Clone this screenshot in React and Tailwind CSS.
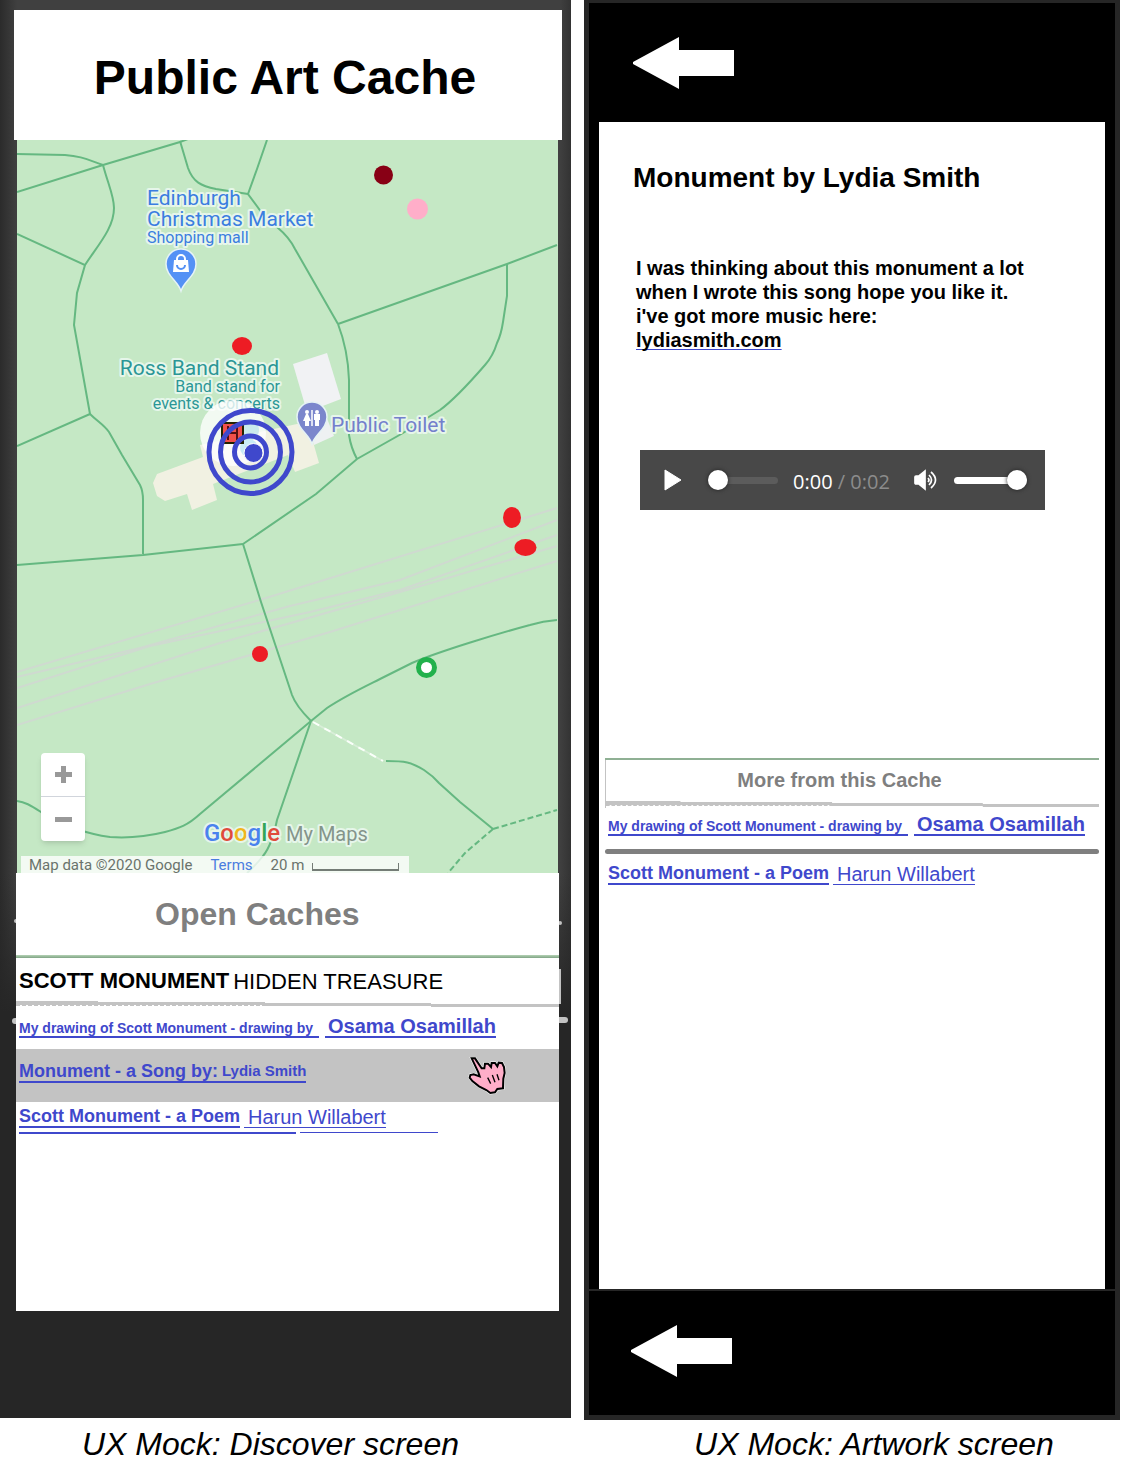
import React from "react";

const FONT = "font-['Liberation_Sans',Arial,sans-serif]";

const PATHS = [
  "M17 192 L103 165 L180 142 L188 139",
  "M17 154 L65 155 C80 156 86 159 103 165",
  "M103 165 C108 184 114 196 114 208 C114 228 98 245 85 265",
  "M17 234 L85 265 L77 293 L74 325 L90 414",
  "M17 446 L90 414 C98 422 103 424 109 432 L122 455 L140 485 Q143 491 143 500 V554",
  "M17 565 L143 555 L243 544",
  "M180 141 L188 168 C193 182 201 186 216 189 L248 194",
  "M267 140 L257 169 L248 194 L262 213 L278 228 Q289 237 295 249 L338 324",
  "M338 324 L507 264 L557 245",
  "M338 324 Q348 350 349 380 V435 Q351 448 357 459",
  "M507 264 V296 L503 322 Q501 335 497 343 Q493 356 485 365 C472 380 455 399 440 410 L403 433 L357 459 L316 494 L243 544",
  "M243 544 L261 602 L275 644 L292 695 Q296 706 311 721",
  "M311 721 L327 708 C345 696 362 688 380 679 L412 663 C440 651 500 633 530 625 Q543 621 557 620",
  "M311 721 L200 814 C188 825 180 828 165 832 C145 837 125 838 110 837 C95 835 88 833 80 830 L41 812 C30 805 25 802 17 801",
  "M311 721 L277 820 Q272 845 263 856 Q256 865 247 873",
  "M386 761 C405 761 411 762 424 770 Q433 776 439 783 L460 802 L493 829",
];

const RAILS = [
  "M17 672 L266 598 L557 508",
  "M17 677 L140 648 L290 606 L400 580 L557 520",
  "M17 688 L150 646 L310 612 L400 590 L557 535",
  "M17 708 L220 643 L400 592 L557 546",
  "M17 725 L150 684 L330 632 L557 561",
];

const HALO = { paintOrder: "stroke", stroke: "#e6f6ea", strokeWidth: 4, strokeLinejoin: "round" };

function Pin({ x, y, color, children }) {
  return (
    <g transform={`translate(${x} ${y})`}>
      <path
        d="M0 41 C-3 31 -15 26 -15 14 A15 15 0 0 1 15 14 C15 26 3 31 0 41Z"
        fill={color}
        stroke="#e6f3f5"
        strokeWidth="1.500"
      />
      {children}
    </g>
  );
}

function MapDrawing() {
  return (
    <svg viewBox="17 140 541 733" className="block h-auto w-full font-[Roboto,sans-serif]" role="img" aria-label="Map of nearby caches">
      <rect x="17" y="140" width="541" height="733" fill="#c5e8c5" />
      <g fill="none" stroke="#cfdad0" strokeWidth="2">
        {RAILS.map((d) => <path key={d} d={d} />)}
      </g>
      <path d="M293 364 L327 353 L341 399 L307 412Z" fill="#f1f2f4" />
      <path d="M153 483 L157 474 L203 457 L200 445 L297 424 L308 424 L319 463 L295 472 L288 455 L213 484 L217 500 L192 510 L187 494 L165 501 L157 496Z" fill="#f1f1e2" />
      <path d="M306 422 L326 416 L334 436 L314 445Z" fill="#eef1f2" />
      <g fill="none" stroke="#65b881" strokeWidth="2">
        {PATHS.map((d) => <path key={d} d={d} />)}
        <path d="M493 829 L557 810" strokeDasharray="6 3" />
        <path d="M493 829 L465 853 L448 873" strokeDasharray="6 3" />
      </g>
      <path d="M313 722 L383 761" stroke="#d8eed8" strokeWidth="2" />
      <path d="M313 722 L383 761" stroke="#fafffa" strokeWidth="2" strokeDasharray="7 6" />

      <g fontSize="21" style={HALO}>
        <text x="147" y="205" fill="#3b7ee0">Edinburgh</text>
        <text x="147" y="226" fill="#3b7ee0">Christmas Market</text>
        <text x="147" y="243" fill="#3b7ee0" fontSize="16">Shopping mall</text>
        <text x="279" y="375" fill="#2b9696" textAnchor="end">Ross Band Stand</text>
        <text x="280" y="392" fill="#2b9696" textAnchor="end" fontSize="16">Band stand for</text>
        <text x="280" y="409" fill="#2b9696" textAnchor="end" fontSize="16">events &amp; concerts</text>
        <text x="331" y="432" fill="#7480cc">Public Toilet</text>
      </g>

      <Pin x={181} y={250} color="#5491f5">
        <path d="M-7 10 H7 L8 22 H-8Z" fill="#fff" />
        <path d="M-4 11 V9 A4 4 0 0 1 4 9 V11" fill="none" stroke="#fff" strokeWidth="2" />
        <path d="M-4 15 A4 4 0 0 0 4 15" fill="none" stroke="#5491f5" strokeWidth="2" />
      </Pin>
      <Pin x={312} y={403} color="#7b86cc">
        <path d="M0 7 V23" stroke="#fff" strokeWidth="1.500" />
        <circle cx="-5" cy="9" r="2" fill="#fff" />
        <path d="M-6 11 H-4 L-1 18 H-3 V23 H-7 V18 H-9Z" fill="#fff" />
        <circle cx="5" cy="9" r="2" fill="#fff" />
        <path d="M2 11 H8 V17 H7 V23 H3 V17 H2Z" fill="#fff" />
      </Pin>

      <circle cx="233" cy="433" r="33" fill="#ffffff" opacity=".78" />
      <circle cx="248" cy="430" r="11" fill="#b9e2ea" opacity=".7" />
      <circle cx="249" cy="448" r="9" fill="#c9ebf5" />
      <rect x="222" y="423" width="21" height="20" fill="#f2504a" stroke="#220" strokeWidth="2" />
      <path d="M228 426 V440 M237 426 V440 M228 433 H237" stroke="#511" strokeWidth="2" />
      <g fill="none" stroke="#3f48cc" strokeWidth="5">
        <circle cx="250.500" cy="452" r="41.500" />
        <circle cx="250.500" cy="452" r="30" />
        <circle cx="250.500" cy="452" r="16" />
      </g>
      <circle cx="253.500" cy="453" r="9.500" fill="#3f48cc" stroke="#fff" strokeWidth="1" />

      <circle cx="383.500" cy="175" r="9.500" fill="#880015" />
      <circle cx="417.500" cy="209" r="10.500" fill="#ffaec9" />
      <g fill="#ed1c24">
        <ellipse cx="242" cy="346" rx="10" ry="9" />
        <ellipse cx="512" cy="517.500" rx="9" ry="10.500" />
        <ellipse cx="525.500" cy="547.500" rx="11" ry="8.500" />
        <circle cx="260" cy="654" r="8" />
      </g>
      <circle cx="426.500" cy="667.500" r="8" fill="#fff" stroke="#22b14c" strokeWidth="5" />

      <g style={HALO}>
        <text x="204" y="841" fontSize="24" fontWeight="500">
          <tspan fill="#4a82ee">G</tspan>
          <tspan fill="#e04a3c">o</tspan>
          <tspan fill="#f0b51c">o</tspan>
          <tspan fill="#4a82ee">g</tspan>
          <tspan fill="#33a557">l</tspan>
          <tspan fill="#e04a3c">e</tspan>
        </text>
        <text x="286" y="841" fontSize="20" fill="#84948a">My Maps</text>
      </g>
    </svg>
  );
}

function MapPanel() {
  return (
    <div className="relative ml-[17px] mr-[13px]">
      <MapDrawing />
      <div className="absolute bottom-8 left-6 flex w-11 flex-col rounded-sm bg-white shadow-md">
        <button aria-label="Zoom in" className="flex h-11 items-center justify-center border-b border-gray-300">
          <svg width="17" height="17" viewBox="0 0 17 17"><path d="M8.500 0 V17 M0 8.500 H17" stroke="#999" strokeWidth="5" /></svg>
        </button>
        <button aria-label="Zoom out" className="flex h-11 items-center justify-center">
          <svg width="17" height="17" viewBox="0 0 17 17"><path d="M0 8.500 H17" stroke="#999" strokeWidth="5" /></svg>
        </button>
      </div>
      <div className="absolute bottom-0 left-1 flex h-[17px] items-center bg-white/80 pl-2 pr-2.5 font-[Roboto,sans-serif] text-[15px] leading-4 text-[#6a736c]">
        <span>Map data ©2020 Google</span>
        <a href="#terms" className="ml-[18px] text-[#4a7de0]">Terms</a>
        <span className="ml-[18px]">20 m</span>
        <span className="mb-0.5 ml-2 h-2 w-[87px] self-end border-x border-b-2 border-[#747c76]" />
      </div>
    </div>
  );
}

function SteppedDivider() {
  return (
    <svg viewBox="0 0 543 7" preserveAspectRatio="none" className="block h-[7px] w-full" aria-hidden="true">
      <path d="M0 0 H82 V1 H249 V2 H415 V3 H543 V6 H415 V5 H0Z" fill="#c3c3c3" />
      <path d="M4 4.500 H249" stroke="#fff" strokeWidth="1" strokeDasharray="2 4" />
    </svg>
  );
}

function DrawingLink() {
  return (
    <a href="#drawing" className="flex items-end gap-1.5 whitespace-nowrap font-bold text-[#3f48cc]">
      <span className="border-b-2 border-current pr-1.5 text-sm leading-4">My drawing of Scott Monument - drawing by</span>
      <span className="border-b-2 border-current pl-[3px] text-xl leading-5">Osama Osamillah</span>
    </a>
  );
}

function PoemLink() {
  return (
    <a href="#poem" className="flex items-end gap-1 whitespace-nowrap text-[#3f48cc]">
      <span className="border-b-2 border-current text-lg font-bold leading-5">Scott Monument - a Poem</span>
      <span className="border-b border-current pl-1 text-xl leading-5">Harun Willabert</span>
    </a>
  );
}

const HAND =
  "M64 54 L74 54 L94 84 L102 84 L104 70 L113 70 L122 80 L124 68 L134 68 L141 78 L145 67 L155 68 L161 80 L163 98 L159 115 L158 144 L141 146 L134 156 L120 158 L108 149 L86 138 L66 122 L58 112 L60 104 L70 102 L88 108 L84 96Z";

function HandPointer() {
  return (
    <svg width="40" height="38" viewBox="50 50 120 114" className="shrink-0" aria-hidden="true">
      <path d={HAND} fill="#ffaec9" stroke="#fff" strokeWidth="9" />
      <path d={HAND} fill="#ffaec9" stroke="#000" strokeWidth="6" />
      <path d="M112 112 L121 130 M126 104 L134 126 M140 102 L146 120" stroke="#000" strokeWidth="4" />
    </svg>
  );
}

function DiscoverScreen() {
  return (
    <figure>
      <div className="h-[1418px] bg-[linear-gradient(to_right,#2b2b2b,#404040_3%,#404040_98%,#333)] pt-2.5">
        <header className="ml-3.5 mr-[9px] flex h-[130px] items-center justify-center bg-white pr-1.5 pt-1.5">
          <h1 className="text-5xl font-bold">Public Art Cache</h1>
        </header>
        <MapPanel />
        <div className="relative bg-[linear-gradient(to_bottom,transparent,#262626_140px)] pb-[107px]">
          <span className="absolute left-3 top-[145px] h-1.5 w-2 rounded-full bg-[#c3c3c3]" />
          <span className="absolute right-[3px] top-[144px] h-1.5 w-3 rounded-full bg-[#c3c3c3]" />
          <span className="absolute left-3.5 top-[46px] h-1 w-1 rounded-full bg-[#c3c3c3]" />
          <span className="absolute right-[9px] top-12 h-1 w-1 rounded-full bg-[#c3c3c3]" />
          <span className="absolute right-2.5 top-24 h-[35px] w-[3px] bg-[#c3c3c3]" />
          <div className="relative ml-4 mr-3 h-[438px] bg-white">
            <h2 className="h-[82px] pl-[139px] text-[32px] font-bold leading-[82px] text-[#7f7f7f]">Open Caches</h2>
            <div className="h-[3px] bg-gradient-to-b from-[#b5d3b5] to-[#7fa384]" />
            <div className="flex h-[43px] items-center gap-1 whitespace-nowrap pl-[3px] pt-0.5 text-[22px]">
              <strong className="leading-7">SCOTT MONUMENT</strong>
              <span className="pt-0.5 leading-7">HIDDEN TREASURE</span>
            </div>
            <SteppedDivider />
            <div className="flex h-[41px] items-center pb-1 pl-[3px]">
              <DrawingLink />
            </div>
            <div className="flex h-[53px] items-center justify-between bg-[#c3c3c3] pl-[3px] pr-[52px]">
              <a href="#song" className="flex items-end whitespace-nowrap pb-2 font-bold text-[#3f48cc]">
                <span className="border-b-2 border-current text-lg leading-5">Monument - a Song by:</span>
                <span className="border-b-2 border-current pl-1 text-[15px] leading-5">Lydia Smith</span>
              </a>
              <HandPointer />
            </div>
            <div className="flex h-[26px] items-end pl-[3px]">
              <PoemLink />
            </div>
            <div className="ml-[3px] mt-1 flex items-start gap-1">
              <span className="h-0.5 w-[277px] bg-[#3f48cc]" />
              <span className="h-px w-[138px] bg-[#3f48cc]" />
            </div>
          </div>
        </div>
      </div>
      <figcaption className="pr-[30px] pt-2 text-center text-[32px] italic leading-9">UX Mock: Discover screen</figcaption>
    </figure>
  );
}

function BackButton() {
  return (
    <button aria-label="Back" className="block">
      <svg width="102" height="52" viewBox="0 0 102 52">
        <path d="M0 25 L46 0 V13 H101 V39 H46 V52 L0 27Z" fill="#fff" />
      </svg>
    </button>
  );
}

const THUMB =
  "appearance-none rounded-full [&::-webkit-slider-thumb]:h-5 [&::-webkit-slider-thumb]:w-5 [&::-webkit-slider-thumb]:appearance-none [&::-webkit-slider-thumb]:rounded-full [&::-webkit-slider-thumb]:bg-white [&::-webkit-slider-thumb]:shadow-[0_0_4px_#222]";

function Player() {
  return (
    <div className="flex h-[60px] max-w-[405px] items-center bg-[#484848] pl-6 pr-[18px]">
      <button aria-label="Play" className="shrink-0">
        <svg width="18" height="22" viewBox="0 0 18 22"><path d="M1 1 L17 11 L1 21Z" fill="#fff" stroke="#fff" strokeWidth="1" strokeLinejoin="round" /></svg>
      </button>
      <input type="range" aria-label="Seek" defaultValue="0" className={`ml-[26px] h-[7px] w-[70px] bg-[#5c5c5c] ${THUMB}`} />
      <span className="ml-[15px] whitespace-nowrap pt-1 font-['Open_Sans',sans-serif] text-xl text-[#8c8c8c]">
        <span className="text-white">0:00</span> / 0:02
      </span>
      <button aria-label="Mute" className="ml-auto shrink-0">
        <svg width="25" height="22" viewBox="0 0 25 22" fill="none" stroke="#fff" strokeWidth="1.700">
          <path d="M12 2 V20 L6 15 H3 Q2 15 2 14 V8 Q2 7 3 7 H6Z" fill="#fff" />
          <path d="M15 9 Q17 11 15 13 M16 6 Q21 11 16 16 M18 3 Q27 11 18 19" />
        </svg>
      </button>
      <input type="range" aria-label="Volume" defaultValue="100" className={`ml-4 h-[7px] w-[73px] bg-white ${THUMB}`} />
    </div>
  );
}

function ArtworkScreen() {
  return (
    <figure>
      <div className="h-[1420px] border-x-[5px] border-b-[5px] border-t-[3px] border-[#262626] bg-black">
        <div className="h-[119px] pl-11 pt-[34px]">
          <BackButton />
        </div>
        <div className="mx-2.5 h-[1167px] bg-white px-1.5 pt-[38px]">
          <div className="pl-7">
            <h1 className="text-[28px] font-bold leading-9">Monument by Lydia Smith</h1>
            <p className="mt-[60px] pl-[3px] text-xl font-bold leading-6">
              I was thinking about this monument a lot
              <br />
              when I wrote this song hope you like it.
              <br />
              i've got more music here:
              <br />
              <a href="#lydiasmith" className="underline decoration-[#3f48cc] decoration-1 underline-offset-2 [text-decoration-skip-ink:none]">lydiasmith.com</a>
            </p>
            <div className="ml-[7px] mt-[98px]">
              <Player />
            </div>
          </div>
          <section className="mt-[248px]">
            <div className="h-0.5 bg-[#8fb094]" />
            <div className="border-l border-[#c3c3c3]">
              <h2 className="h-[41px] pr-[26px] text-center text-xl font-bold leading-10 text-[#7f7f7f]">More from this Cache</h2>
              <SteppedDivider />
            </div>
            <div className="flex h-[41px] items-center pb-2 pl-[3px]">
              <DrawingLink />
            </div>
            <div className="h-[5px] rounded-full bg-[#7f7f7f]" />
            <div className="flex h-[31px] items-end pl-[3px]">
              <PoemLink />
            </div>
          </section>
        </div>
        <div className="h-0.5 bg-[#262626]" />
        <div className="pl-[42px] pt-[34px]">
          <BackButton />
        </div>
      </div>
      <figcaption className="pl-11 pt-1.5 text-center text-[32px] italic leading-9">UX Mock: Artwork screen</figcaption>
    </figure>
  );
}

export default function App() {
  return (
    <main className={`grid min-h-screen grid-cols-[571fr_536fr] gap-[13px] bg-white pr-3 text-black ${FONT}`}>
      <DiscoverScreen />
      <ArtworkScreen />
    </main>
  );
}
